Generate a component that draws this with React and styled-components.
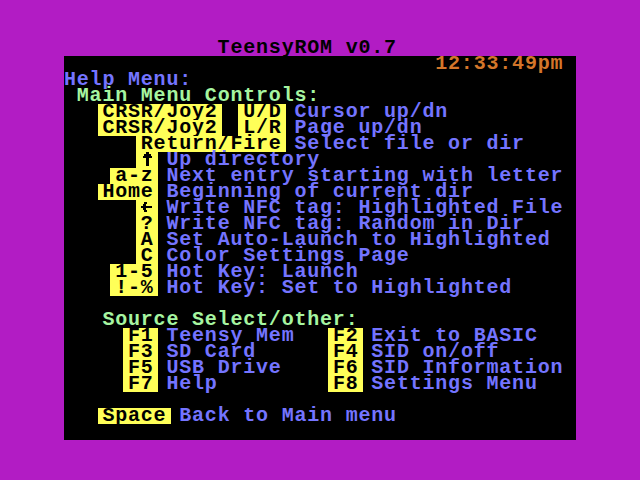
import React from "react";
import styled, { createGlobalStyle } from "styled-components";

const CELL = 12.8;
const FONT = 20;

const colors = {
  border: "#b21cc4",
  blue: "#7474ff",
  green: "#a6f5a0",
  orange: "#d4762a",
  yellow: "#ffff58",
};

const GlobalStyle = createGlobalStyle`
  html, body {
    margin: 0;
    padding: 0;
    background: ${colors.border};
  }
`;

const Frame = styled.div`
  width: 640px;
  height: 480px;
  box-sizing: border-box;
  padding: 40px 64px;
  background: ${colors.border};
  font-family: "Liberation Mono", "DejaVu Sans Mono", monospace;
  font-weight: bold;
  font-size: ${FONT}px;
  letter-spacing: ${CELL - FONT * 0.6}px;
  display: flex;
  flex-direction: column;
`;

const TitleBar = styled.div`
  height: 16px;
  line-height: 16px;
  white-space: pre;
  color: #000;
`;

const Screen = styled.div`
  flex: 1;
  background: #000;
  display: flex;
  flex-direction: column;
`;

const Line = styled.div`
  height: 16px;
  line-height: 16px;
  white-space: pre;
  color: ${(p) => p.$color || colors.blue};
`;

const Key = styled.span`
  display: inline-block;
  height: 16px;
  line-height: 16px;
  vertical-align: top;
  background: ${colors.yellow};
  color: #000;
  padding: 0 4.8px;
  margin: 0 -4.8px;
`;

const Glyph = styled.svg`
  display: inline-block;
  vertical-align: top;
  width: ${CELL}px;
  height: 16px;
`;

const Text = styled.span`
  color: ${(p) => p.$color || "inherit"};
`;

// PETSCII arrow glyphs, 8x8 bitmaps
const bitmaps = {
  up: [
    "00011000",
    "00111100",
    "01111110",
    "00011000",
    "00011000",
    "00011000",
    "00011000",
    "00000000",
  ],
  left: [
    "00000000",
    "00110000",
    "01100000",
    "11111110",
    "01100000",
    "00110000",
    "00000000",
    "00000000",
  ],
};

const PixelGlyph = ({ name }) => (
  <Glyph viewBox="0 0 8 8" preserveAspectRatio="none" shapeRendering="crispEdges">
    {bitmaps[name].flatMap((row, y) =>
      row
        .split("")
        .map((b, x) =>
          b === "1" ? <rect key={`${x}-${y}`} x={x} y={y} width="1" height="1" fill="#000" /> : null
        )
    )}
  </Glyph>
);

// each segment: [column, text, kind]
const rows = [
  [[29, "12:33:49pm", "time"]],
  [[0, "Help Menu:"]],
  [[1, "Main Menu Controls:", "head"]],
  [[3, "CRSR/Joy2", "key"], [14, "U/D", "key"], [18, "Cursor up/dn"]],
  [[3, "CRSR/Joy2", "key"], [14, "L/R", "key"], [18, "Page up/dn"]],
  [[6, "Return/Fire", "key"], [18, "Select file or dir"]],
  [[6, "up", "glyph"], [8, "Up directory"]],
  [[4, "a-z", "key"], [8, "Next entry starting with letter"]],
  [[3, "Home", "key"], [8, "Beginning of current dir"]],
  [[6, "left", "glyph"], [8, "Write NFC tag: Highlighted File"]],
  [[6, "?", "key"], [8, "Write NFC tag: Random in Dir"]],
  [[6, "A", "key"], [8, "Set Auto-Launch to Highlighted"]],
  [[6, "C", "key"], [8, "Color Settings Page"]],
  [[4, "1-5", "key"], [8, "Hot Key: Launch"]],
  [[4, "!-%", "key"], [8, "Hot Key: Set to Highlighted"]],
  [],
  [[3, "Source Select/other:", "head"]],
  [[5, "F1", "key"], [8, "Teensy Mem"], [21, "F2", "key"], [24, "Exit to BASIC"]],
  [[5, "F3", "key"], [8, "SD Card"], [21, "F4", "key"], [24, "SID on/off"]],
  [[5, "F5", "key"], [8, "USB Drive"], [21, "F6", "key"], [24, "SID Information"]],
  [[5, "F7", "key"], [8, "Help"], [21, "F8", "key"], [24, "Settings Menu"]],
  [],
  [[3, "Space", "key"], [9, "Back to Main menu"]],
  [],
];

const kindColor = {
  time: colors.orange,
  head: colors.green,
};

const Row = ({ segments }) => {
  let col = 0;
  const parts = [];
  segments.forEach(([at, text, kind], i) => {
    if (at > col) parts.push(" ".repeat(at - col));
    if (kind === "glyph") {
      col = at + 1;
      parts.push(
        <Key key={i}>
          <PixelGlyph name={text} />
        </Key>
      );
      return;
    }
    col = at + text.length;
    if (kind === "key") parts.push(<Key key={i}>{text}</Key>);
    else
      parts.push(
        <Text key={i} $color={kindColor[kind]}>
          {text}
        </Text>
      );
  });
  return <Line>{parts.length ? parts : " "}</Line>;
};

export default function App() {
  return (
    <>
      <GlobalStyle />
      <Frame>
        <TitleBar>{"            TeensyROM v0.7"}</TitleBar>
        <Screen>
          {rows.map((r, i) => (
            <Row key={i} segments={r} />
          ))}
        </Screen>
      </Frame>
    </>
  );
}
